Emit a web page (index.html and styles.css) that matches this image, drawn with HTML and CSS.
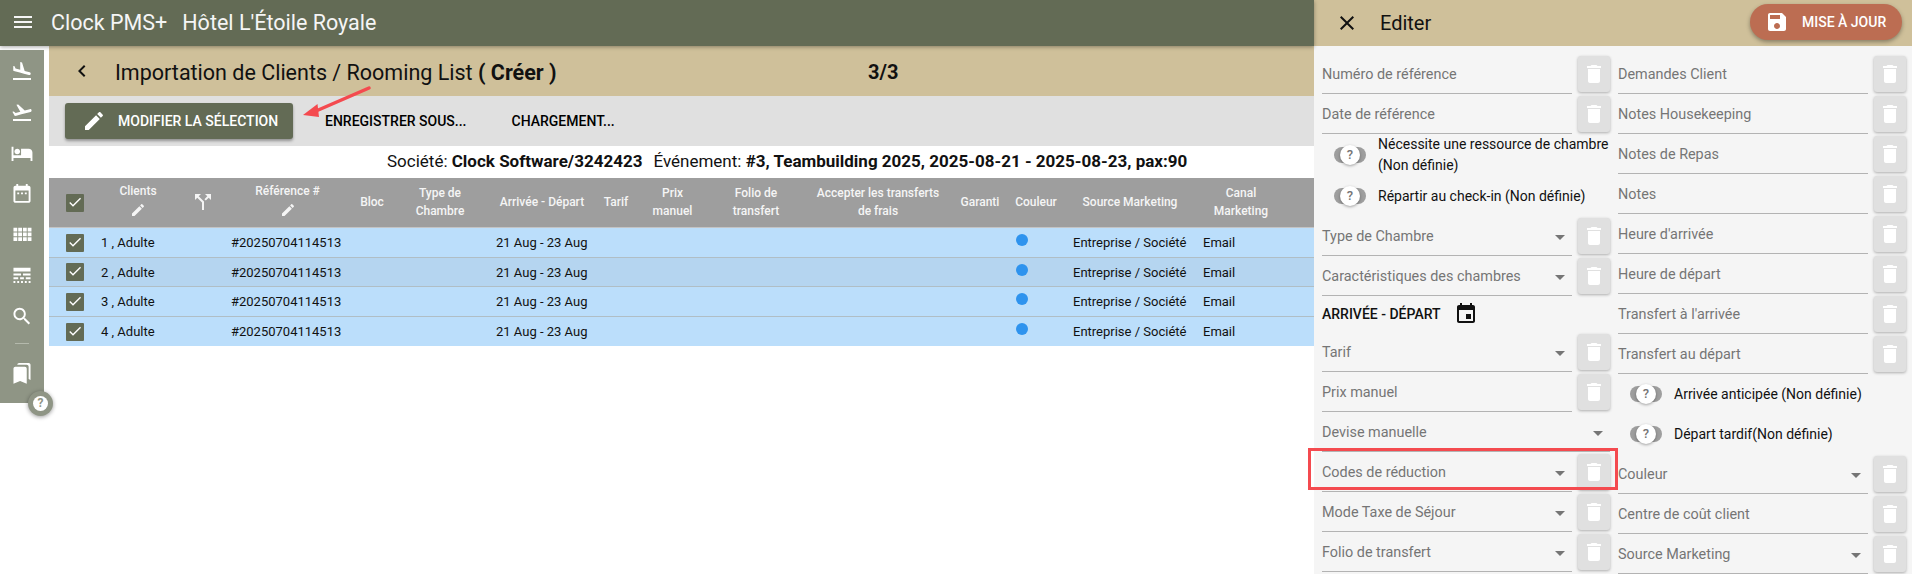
FILE: index.html
```html
<!DOCTYPE html>
<html lang="fr">

<head>
  <meta charset="UTF-8">
  <title>Clock PMS+</title>
  <link rel="stylesheet" href="styles.css">
</head>

<body>
  <svg class="defs">
    <symbol id="i-menu" viewBox="0 0 24 24"><path d="M3 18h18v-2H3v2zm0-5h18v-2H3v2zm0-7v2h18V6H3z"/></symbol>
    <symbol id="i-land" viewBox="0 0 24 24"><path d="M2.5 19h19v2h-19zm7.18-5.73l4.35 1.16 5.31 1.42c.8.21 1.62-.26 1.84-1.06.21-.8-.26-1.62-1.06-1.84l-5.31-1.42-2.76-9.02L10.12 2v8.28L5.15 8.95l-.93-2.32-1.45-.39v5.17l1.6.43 5.31 1.43z"/></symbol>
    <symbol id="i-takeoff" viewBox="0 0 24 24"><path d="M2.5 19h19v2h-19zm19.57-9.36c-.21-.8-1.04-1.28-1.84-1.06L14.92 10l-6.9-6.43-1.93.51 4.14 7.17-4.97 1.33-1.97-1.54-1.45.39 1.82 3.16.77 1.33 1.6-.43 5.31-1.42 4.35-1.16L21 11.49c.81-.23 1.28-1.05 1.07-1.85z"/></symbol>
    <symbol id="i-hotel" viewBox="0 0 24 24"><path d="M7 13c1.66 0 3-1.34 3-3S8.66 7 7 7s-3 1.34-3 3 1.34 3 3 3zm12-6h-8v7H3V5H1v15h2v-3h18v3h2v-9c0-2.21-1.79-4-4-4z"/></symbol>
    <symbol id="i-date" viewBox="0 0 24 24"><path d="M9 11H7v2h2v-2zm4 0h-2v2h2v-2zm4 0h-2v2h2v-2zm2-7h-1V2h-2v2H8V2H6v2H5c-1.11 0-1.99.9-1.99 2L3 20c0 1.1.89 2 2 2h14c1.1 0 2-.9 2-2V6c0-1.1-.9-2-2-2zm0 16H5V9h14v11z"/></symbol>
    <symbol id="i-comfy" viewBox="0 0 24 24"><path d="M3 9h4V5H3v4zm0 5h4v-4H3v4zm5 0h4v-4H8v4zm5 0h4v-4h-4v4zM8 9h4V5H8v4zm5-4v4h4V5h-4zm5 9h4v-4h-4v4zM3 19h4v-4H3v4zm5 0h4v-4H8v4zm5 0h4v-4h-4v4zm5 0h4v-4h-4v4zm0-14v4h4V5h-4z"/></symbol>
    <symbol id="i-dense" viewBox="0 0 24 24"><path d="M3 4h18v4H3zM3 10h8v2H3zM13 10h8v2h-8zM3 14h5v2H3zM10 14h4v2h-4zM16 14h5v2h-5zM3 18h2v2H3zM7 18h2v2H7zM11 18h2v2h-2zM15 18h2v2h-2zM19 18h2v2h-2z"/></symbol>
    <symbol id="i-search" viewBox="0 0 24 24"><path d="M15.5 14h-.79l-.28-.27C15.41 12.59 16 11.11 16 9.5 16 5.91 13.09 3 9.5 3S3 5.91 3 9.5 5.91 16 9.5 16c1.61 0 3.09-.59 4.23-1.57l.27.28v.79l5 4.99L20.49 19l-4.99-5zm-6 0C7.01 14 5 11.99 5 9.5S7.01 5 9.5 5 14 7.01 14 9.5 11.99 14 9.5 14z"/></symbol>
    <symbol id="i-marks" viewBox="0 0 24 24"><path d="M19 18l2 1V3c0-1.1-.9-2-2-2H8.99C7.89 1 7 1.9 7 3h10c1.1 0 2 .9 2 2v13zM15 5H5c-1.1 0-2 .9-2 2v16l7-3 7 3V7c0-1.1-.9-2-2-2z"/></symbol>
    <symbol id="i-edit" viewBox="0 0 24 24"><path d="M3 17.25V21h3.75L17.81 9.94l-3.75-3.75L3 17.25zM20.71 7.04c.39-.39.39-1.02 0-1.41l-2.34-2.34c-.39-.39-1.02-.39-1.41 0l-1.83 1.83 3.75 3.75 1.83-1.83z"/></symbol>
    <symbol id="i-split" viewBox="0 0 24 24"><path d="M14 4l2.29 2.29-2.88 2.88 1.42 1.42 2.88-2.88L20 10V4zm-4 0H4v6l2.29-2.29 4.71 4.7V20h2v-8.41l-5.29-5.3z"/></symbol>
    <symbol id="i-back" viewBox="0 0 24 24"><path d="M15.41 7.41L14 6l-6 6 6 6 1.41-1.41L10.83 12z"/></symbol>
    <symbol id="i-close" viewBox="0 0 24 24"><path d="M19 6.41L17.59 5 12 10.59 6.41 5 5 6.41 10.59 12 5 17.59 6.41 19 12 13.41 17.59 19 19 17.59 13.41 12z"/></symbol>
    <symbol id="i-save" viewBox="0 0 24 24"><path d="M17 3H5c-1.11 0-2 .9-2 2v14c0 1.1.89 2 2 2h14c1.1 0 2-.9 2-2V7l-4-4zm-5 16c-1.66 0-3-1.34-3-3s1.34-3 3-3 3 1.34 3 3-1.34 3-3 3zm3-10H5V5h10v4z"/></symbol>
    <symbol id="i-trash" viewBox="0 0 24 24"><path d="M6 19c0 1.1.9 2 2 2h8c1.1 0 2-.9 2-2V7H6v12zM19 4h-3.5l-1-1h-5l-1 1H5v2h14V4z"/></symbol>
    <symbol id="i-event" viewBox="0 0 24 24"><path d="M17 12h-5v5h5v-5zM16 1v2H8V1H6v2H5c-1.11 0-1.99.9-1.99 2L3 19c0 1.1.89 2 2 2h14c1.1 0 2-.9 2-2V5c0-1.1-.9-2-2-2h-1V1h-2zm3 18H5V8h14v11z"/></symbol>
    <symbol id="i-check" viewBox="0 0 24 24"><path d="M9 16.17L4.83 12l-1.42 1.41L9 19 21 7l-1.41-1.41z"/></symbol>
  </svg>

  <div class="shell">
    <div class="main">
      <header class="topbar">
        <svg class="menu-icon"><use href="#i-menu"/></svg>
        <span class="brand">Clock PMS+</span>
        <span class="hotel">Hôtel L'Étoile Royale</span>
      </header>

      <div class="work">
        <nav class="sidebar">
          <svg class="nav-icon"><use href="#i-land"/></svg>
          <svg class="nav-icon"><use href="#i-takeoff"/></svg>
          <svg class="nav-icon"><use href="#i-hotel"/></svg>
          <svg class="nav-icon"><use href="#i-date"/></svg>
          <svg class="nav-icon"><use href="#i-comfy"/></svg>
          <svg class="nav-icon"><use href="#i-dense"/></svg>
          <svg class="nav-icon"><use href="#i-search"/></svg>
          <div class="nav-line"></div>
          <svg class="nav-icon"><use href="#i-marks"/></svg>
          <div class="help"><span>?</span></div>
        </nav>

        <div class="content">
          <div class="subhead">
            <svg class="back-icon"><use href="#i-back"/></svg>
            <h1 class="page-title">Importation de Clients / Rooming List <b>( Créer )</b></h1>
            <b class="step">3/3</b>
          </div>

          <div class="toolbar">
            <button class="btn-main"><svg><use href="#i-edit"/></svg>Modifier la sélection</button>
            <button class="btn-flat btn-save">Enregistrer sous...</button>
            <button class="btn-flat">Chargement...</button>
          </div>

          <div class="info">Société: <b>Clock Software/3242423</b><span class="info-gap"></span>Événement: <b>#3, Teambuilding 2025, 2025-08-21 - 2025-08-23, pax:90</b></div>

          <table class="grid">
            <colgroup>
              <col class="c-check"><col class="c-client"><col class="c-split"><col class="c-ref"><col class="c-bloc">
              <col class="c-type"><col class="c-date"><col class="c-tarif"><col class="c-prix"><col class="c-folio">
              <col class="c-frais"><col class="c-garanti"><col class="c-color"><col class="c-source"><col class="c-canal"><col>
            </colgroup>
            <thead>
              <tr>
                <th class="td-check"><span class="check"><svg><use href="#i-check"/></svg></span></th>
                <th class="th-edit">Clients<svg class="th-pen"><use href="#i-edit"/></svg></th>
                <th><svg class="th-split"><use href="#i-split"/></svg></th>
                <th class="th-edit">Référence #<svg class="th-pen"><use href="#i-edit"/></svg></th>
                <th>Bloc</th>
                <th>Type de<br>Chambre</th>
                <th>Arrivée - Départ</th>
                <th>Tarif</th>
                <th>Prix<br>manuel</th>
                <th>Folio de<br>transfert</th>
                <th>Accepter les transferts<br>de frais</th>
                <th>Garanti</th>
                <th>Couleur</th>
                <th>Source Marketing</th>
                <th>Canal<br>Marketing</th>
                <th></th>
              </tr>
            </thead>
            <tbody>
              <tr>
                <td class="td-check"><span class="check"><svg><use href="#i-check"/></svg></span></td>
                <td>1 , Adulte</td><td></td><td>#20250704114513</td><td></td><td></td>
                <td>21 Aug - 23 Aug</td><td></td><td></td><td></td><td></td><td></td>
                <td class="td-dot"><span class="dot"></span></td>
                <td>Entreprise / Société</td><td>Email</td><td></td>
              </tr>
              <tr class="row-hover">
                <td class="td-check"><span class="check"><svg><use href="#i-check"/></svg></span></td>
                <td>2 , Adulte</td><td></td><td>#20250704114513</td><td></td><td></td>
                <td>21 Aug - 23 Aug</td><td></td><td></td><td></td><td></td><td></td>
                <td class="td-dot"><span class="dot"></span></td>
                <td>Entreprise / Société</td><td>Email</td><td></td>
              </tr>
              <tr>
                <td class="td-check"><span class="check"><svg><use href="#i-check"/></svg></span></td>
                <td>3 , Adulte</td><td></td><td>#20250704114513</td><td></td><td></td>
                <td>21 Aug - 23 Aug</td><td></td><td></td><td></td><td></td><td></td>
                <td class="td-dot"><span class="dot"></span></td>
                <td>Entreprise / Société</td><td>Email</td><td></td>
              </tr>
              <tr class="row-last">
                <td class="td-check"><span class="check"><svg><use href="#i-check"/></svg></span></td>
                <td>4 , Adulte</td><td></td><td>#20250704114513</td><td></td><td></td>
                <td>21 Aug - 23 Aug</td><td></td><td></td><td></td><td></td><td></td>
                <td class="td-dot"><span class="dot"></span></td>
                <td>Entreprise / Société</td><td>Email</td><td></td>
              </tr>
            </tbody>
          </table>
        </div>
      </div>
    </div>

    <aside class="panel">
      <div class="panel-head">
        <svg class="close-icon"><use href="#i-close"/></svg>
        <span class="panel-title">Editer</span>
        <button class="btn-update"><svg><use href="#i-save"/></svg>Mise à jour</button>
      </div>

      <div class="panel-body">
        <div class="col">
          <div class="row"><div class="field">Numéro de référence</div><div class="trash"><svg><use href="#i-trash"/></svg></div></div>
          <div class="row"><div class="field">Date de référence</div><div class="trash"><svg><use href="#i-trash"/></svg></div></div>
          <div class="toggle-row tall"><span class="toggle"><span class="knob">?</span></span><span class="toggle-text">Nécessite une ressource de chambre (Non définie)</span></div>
          <div class="toggle-row"><span class="toggle"><span class="knob">?</span></span><span class="toggle-text">Répartir au check-in (Non définie)</span></div>
          <div class="row"><div class="field select">Type de Chambre</div><div class="trash"><svg><use href="#i-trash"/></svg></div></div>
          <div class="row"><div class="field select">Caractéristiques des chambres</div><div class="trash"><svg><use href="#i-trash"/></svg></div></div>
          <div class="dates"><span>Arrivée - Départ</span><svg><use href="#i-event"/></svg></div>
          <div class="row"><div class="field select">Tarif</div><div class="trash"><svg><use href="#i-trash"/></svg></div></div>
          <div class="row"><div class="field">Prix manuel</div><div class="trash"><svg><use href="#i-trash"/></svg></div></div>
          <div class="row"><div class="field select">Devise manuelle</div></div>
          <div class="row"><div class="field select">Codes de réduction</div><div class="trash"><svg><use href="#i-trash"/></svg></div></div>
          <div class="row"><div class="field select">Mode Taxe de Séjour</div><div class="trash"><svg><use href="#i-trash"/></svg></div></div>
          <div class="row"><div class="field select">Folio de transfert</div><div class="trash"><svg><use href="#i-trash"/></svg></div></div>
        </div>

        <div class="col">
          <div class="row"><div class="field">Demandes Client</div><div class="trash"><svg><use href="#i-trash"/></svg></div></div>
          <div class="row"><div class="field">Notes Housekeeping</div><div class="trash"><svg><use href="#i-trash"/></svg></div></div>
          <div class="row"><div class="field">Notes de Repas</div><div class="trash"><svg><use href="#i-trash"/></svg></div></div>
          <div class="row"><div class="field">Notes</div><div class="trash"><svg><use href="#i-trash"/></svg></div></div>
          <div class="row"><div class="field">Heure d'arrivée</div><div class="trash"><svg><use href="#i-trash"/></svg></div></div>
          <div class="row"><div class="field">Heure de départ</div><div class="trash"><svg><use href="#i-trash"/></svg></div></div>
          <div class="row"><div class="field">Transfert à l'arrivée</div><div class="trash"><svg><use href="#i-trash"/></svg></div></div>
          <div class="row"><div class="field">Transfert au départ</div><div class="trash"><svg><use href="#i-trash"/></svg></div></div>
          <div class="toggle-row"><span class="toggle"><span class="knob">?</span></span><span class="toggle-text">Arrivée anticipée (Non définie)</span></div>
          <div class="toggle-row"><span class="toggle"><span class="knob">?</span></span><span class="toggle-text">Départ tardif(Non définie)</span></div>
          <div class="row"><div class="field select">Couleur</div><div class="trash"><svg><use href="#i-trash"/></svg></div></div>
          <div class="row"><div class="field">Centre de coût client</div><div class="trash"><svg><use href="#i-trash"/></svg></div></div>
          <div class="row"><div class="field select">Source Marketing</div><div class="trash"><svg><use href="#i-trash"/></svg></div></div>
        </div>
      </div>
    </aside>

    <!-- annotations drawn on top of the screenshot -->
    <svg class="arrow" viewBox="0 0 80 40">
      <path d="M67 3L14 26" fill="none" stroke="#f44a4f" stroke-width="3.5" stroke-linecap="round"/>
      <path d="M1 30L15.5 19L17 32z" fill="#f44a4f"/>
    </svg>
    <div class="red-box"></div>
  </div>
</body>

</html>
```

FILE: styles.css
```css
* {
  margin: 0;
  padding: 0;
  box-sizing: border-box;
}

html,
body {
  height: 574px;
  overflow: hidden;
}

body {
  font-family: Roboto, "Liberation Sans", sans-serif;
  background: #fff;
  color: #111;
}

.defs {
  display: none;
}

svg {
  fill: currentColor;
}

.shell {
  position: relative;
  display: flex;
  height: 574px;
}

.main {
  width: 1314px;
  flex-shrink: 0;
}

/* top bar */
.topbar {
  height: 46px;
  background: #636b55;
  color: #f5f5f5;
  display: flex;
  align-items: center;
  padding: 0 0 2px 11px;
  font-size: 21.5px;
  box-shadow: 0 1px 4px rgba(0, 0, 0, .35);
  position: relative;
}

.menu-icon {
  width: 24px;
  height: 24px;
  margin-right: 16px;
}

.hotel {
  margin-left: 15px;
}

.work {
  display: flex;
}

/* left nav */
.sidebar {
  position: relative;
  width: 44px;
  height: 353px;
  margin: 4px 5px 0 0;
  background: #8f9585;
  color: #fff;
  display: flex;
  flex-direction: column;
  align-items: center;
  padding-top: 10px;
  flex-shrink: 0;
}

.nav-icon {
  width: 24px;
  height: 24px;
  margin-bottom: 18px;
}

.nav-line {
  width: 14px;
  height: 1px;
  background: #b4b9ac;
  margin: -2px 0 18px;
}

.help {
  position: absolute;
  left: 28px;
  top: 341px;
  width: 25px;
  height: 25px;
  border-radius: 50%;
  background: #8f9585;
  box-shadow: 0 1px 4px rgba(0, 0, 0, .4);
  display: flex;
  align-items: center;
  justify-content: center;
}

.help span {
  width: 15px;
  height: 15px;
  border-radius: 50%;
  background: #fff;
  color: #8f9585;
  font-size: 12px;
  font-weight: 700;
  line-height: 15px;
  text-align: center;
}

.content {
  flex: 1;
  min-width: 0;
}

/* page header */
.subhead {
  height: 50px;
  background: #cfc09a;
  display: flex;
  align-items: center;
  padding: 2px 0 0 21px;
}

.back-icon {
  width: 24px;
  height: 24px;
  margin: -2px 21px 0 0;
}

.page-title {
  font-size: 21.5px;
  font-weight: 400;
  width: 753px;
}

.page-title b,
.step {
  font-weight: 700;
}

.step {
  font-size: 20px;
}

.toolbar {
  height: 50px;
  background: #e0e0e0;
  display: flex;
  align-items: center;
  padding-left: 16px;
}

.toolbar button {
  font-family: inherit;
  font-size: 14px;
  font-weight: 500;
  text-transform: uppercase;
  border: 0;
  background: none;
}

.toolbar .btn-main {
  width: 228px;
  height: 36px;
  background: #636b55;
  color: #fff;
  border-radius: 3px;
  display: flex;
  align-items: center;
  padding-left: 17px;
  gap: 12px;
  box-shadow: 0 2px 3px rgba(0, 0, 0, .35);
}

.btn-main svg {
  width: 24px;
  height: 24px;
}

.btn-save {
  margin: 0 45px 0 32px;
}

.info {
  height: 32px;
  line-height: 30px;
  font-size: 17px;
  padding-left: 338px;
  white-space: nowrap;
}

.info b {
  font-weight: 700;
}

.info-gap {
  display: inline-block;
  width: 11px;
}

/* table */
.grid {
  width: 1265px;
  table-layout: fixed;
  border-collapse: collapse;
}

.c-check { width: 44px; }
.c-client { width: 90px; }
.c-split { width: 40px; }
.c-ref { width: 129px; }
.c-bloc { width: 40px; }
.c-type { width: 96px; }
.c-date { width: 108px; }
.c-tarif { width: 40px; }
.c-prix { width: 73px; }
.c-folio { width: 94px; }
.c-frais { width: 150px; }
.c-garanti { width: 54px; }
.c-color { width: 58px; }
.c-source { width: 130px; }
.c-canal { width: 92px; }

.grid th {
  height: 49px;
  background: #9e9e9e;
  color: #f5f5f5;
  font-size: 12px;
  font-weight: 500;
  line-height: 18px;
  text-align: center;
  border-bottom: 1px solid #c4c4c4;
}

.th-edit {
  vertical-align: top;
  padding-top: 4px;
}

.th-pen {
  display: block;
  width: 16px;
  height: 16px;
  margin: 2px auto 0;
}

.th-split {
  display: block;
  width: 24px;
  height: 24px;
  margin: 0 auto;
}

.grid td {
  height: 30px;
  background: #bbdefb;
  font-size: 13px;
  padding: 1px 0 0 8px;
  white-space: nowrap;
  border-bottom: 1px solid #b0bec5;
}

.grid .row-hover td {
  height: 29px;
  background: #b5d5f0;
}

.grid .row-last td {
  height: 30px;
  border-bottom: 0;
}

.grid .td-check {
  padding: 0 0 0 8px;
}

.check {
  display: block;
  width: 18px;
  height: 18px;
  margin: 0 auto;
  background: #636b55;
  color: #fff;
  border-radius: 1px;
}

.check svg {
  display: block;
  width: 16px;
  height: 16px;
  margin: 1px;
}

.grid .td-dot {
  vertical-align: top;
  padding: 6px 0 0 9px;
}

.dot {
  display: block;
  width: 12px;
  height: 12px;
  border-radius: 50%;
  background: #2e93ee;
}

/* right side panel */
.panel {
  width: 598px;
  flex-shrink: 0;
  background: #f5f5f5;
}

.panel-head {
  height: 46px;
  background: #cfc09a;
  display: flex;
  align-items: center;
  padding-left: 21px;
}

.close-icon {
  width: 24px;
  height: 24px;
}

.panel-title {
  font-size: 20px;
  margin-left: 21px;
}

.btn-update {
  margin: 0 10px 3px auto;
  width: 152px;
  height: 36px;
  border: 0;
  border-radius: 18px;
  background: #bc6d52;
  color: #fff;
  font-family: inherit;
  font-size: 14px;
  font-weight: 500;
  text-transform: uppercase;
  display: flex;
  align-items: center;
  padding-left: 15px;
  gap: 13px;
  box-shadow: 0 2px 4px rgba(0, 0, 0, .35);
}

.btn-update svg {
  width: 24px;
  height: 24px;
}

.panel-body {
  display: flex;
  gap: 8px;
  padding: 8px 6px 0 8px;
}

.col {
  width: 288px;
}

.row {
  height: 40px;
  display: flex;
  gap: 6px;
}

.field {
  flex: 1;
  position: relative;
  font-size: 14.4px;
  line-height: 39px;
  padding-top: 1px;
  color: #757575;
  border-bottom: 1px solid #b3b3b3;
}

.select::after {
  content: "";
  position: absolute;
  right: 7px;
  top: 19px;
  border-left: 5px solid transparent;
  border-right: 5px solid transparent;
  border-top: 5px solid #757575;
}

.trash {
  width: 32px;
  height: 36px;
  margin-top: 2px;
  background: #e0e0e0;
  color: #fff;
  border-radius: 3px;
  box-shadow: 0 1px 3px rgba(0, 0, 0, .3);
  display: flex;
  align-items: center;
  justify-content: center;
}

.trash svg {
  width: 24px;
  height: 24px;
}

.toggle-row {
  height: 40px;
  display: flex;
  align-items: center;
  padding-left: 12px;
  font-size: 14px;
}

.toggle-row.tall {
  height: 42px;
}

.toggle-text {
  line-height: 21px;
  flex: 1;
}

.toggle {
  position: relative;
  width: 32px;
  height: 16px;
  margin-right: 12px;
  border-radius: 8px;
  background: #9e9e9e;
  flex-shrink: 0;
}

.knob {
  position: absolute;
  left: 6px;
  top: -2px;
  width: 20px;
  height: 20px;
  border-radius: 50%;
  background: #fff;
  color: #757575;
  font-size: 13px;
  font-weight: 500;
  line-height: 20px;
  text-align: center;
  box-shadow: 0 1px 3px rgba(0, 0, 0, .35);
}

.dates {
  height: 36px;
  display: flex;
  align-items: center;
  font-size: 14px;
  font-weight: 500;
  text-transform: uppercase;
}

.dates svg {
  width: 24px;
  height: 24px;
  margin-left: 13px;
}

.arrow {
  position: absolute;
  left: 302px;
  top: 85px;
  width: 80px;
  height: 40px;
}

.red-box {
  position: absolute;
  left: 1308px;
  top: 448px;
  width: 310px;
  height: 42px;
  border: 3px solid #f44a4f;
}
```
